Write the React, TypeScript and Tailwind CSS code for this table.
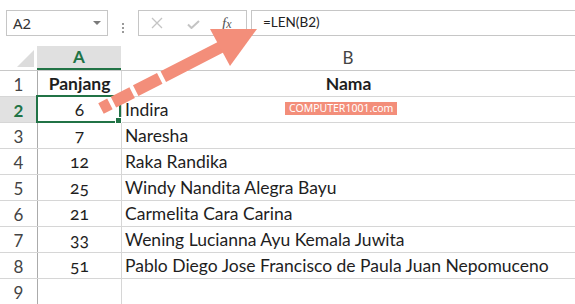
import React from "react";

const rows = [
  { n: 1, a: "Panjang", b: "Nama", head: true },
  { n: 2, a: "6", b: "Indira", selected: true },
  { n: 3, a: "7", b: "Naresha" },
  { n: 4, a: "12", b: "Raka Randika" },
  { n: 5, a: "25", b: "Windy Nandita Alegra Bayu" },
  { n: 6, a: "21", b: "Carmelita Cara Carina" },
  { n: 7, a: "33", b: "Wening Lucianna Ayu Kemala Juwita" },
  { n: 8, a: "51", b: "Pablo Diego Jose Francisco de Paula Juan Nepomuceno" },
  { n: 9, a: "", b: "" },
];

function FormulaBar() {
  return (
    <div className="flex h-[46px] pl-[6px] pt-[10px] font-['Noto_Sans',sans-serif]">
      {/* kotak nama */}
      <div className="flex h-[26px] w-[102px] items-center justify-between border border-[#c6c6c6] pl-[6px] pr-[6px]">
        <span className="text-[15px] leading-none text-[#333]">A2</span>
        <span className="h-0 w-0 border-x-[4px] border-t-[4px] border-x-transparent border-t-[#7a7a7a]" />
      </div>
      <div className="flex w-[30px] flex-col items-center justify-center gap-[2px] pb-[1px]">
        <span className="h-[2px] w-[2px] bg-[#9a9a9a]" />
        <span className="h-[2px] w-[2px] bg-[#9a9a9a]" />
        <span className="h-[2px] w-[2px] bg-[#9a9a9a]" />
      </div>
      {/* tombol */}
      <div className="flex h-[26px] w-[109px] items-center border border-[#c6c6c6]">
        <svg width="12" height="12" viewBox="0 0 12 12" className="ml-[12px]">
          <path d="M1 1 L11 11 M11 1 L1 11" stroke="#c4c4c4" strokeWidth="1.3" fill="none" />
        </svg>
        <svg width="13" height="9" viewBox="0 0 13 9" className="ml-[24px] mt-[2px]">
          <path d="M1 4.5 L4.5 8 L12 1" stroke="#c4c4c4" strokeWidth="2" fill="none" />
        </svg>
        <span className="ml-[22px] font-['Liberation_Serif',serif] text-[15px] italic leading-none text-[#555]">
          f<span className="text-[12px]">x</span>
        </span>
      </div>
      <div className="ml-[4px] flex h-[26px] flex-1 items-center border-y border-l border-[#c6c6c6] pl-[11px]">
        <span className="font-['Lato',sans-serif] text-[13.5px] leading-none text-[#222]">=LEN(B2)</span>
      </div>
    </div>
  );
}

function ColumnHeader() {
  return (
    <div className="flex h-[25px] border-b border-[#c8c8c8] font-['Lato',sans-serif] text-[17px]">
      <div className="relative w-[37px]">
        <svg width="37" height="24" className="absolute left-0 top-0">
          <polygon points="17,21 34,21 34,4" fill="#dcdcdc" />
        </svg>
      </div>
      <div className="flex w-[84px] items-center justify-center border-b-2 border-[#217346] bg-[#e0e0e0] font-bold text-[#217346]">
        A
      </div>
      <div className="flex flex-1 items-center justify-center text-[#444]">B</div>
    </div>
  );
}

export default function App() {
  return (
    <div className="relative h-[304px] w-[575px] overflow-hidden bg-white">
      <FormulaBar />
      <ColumnHeader />
      <div className="font-['Lato',sans-serif] text-[17.5px] text-[#1e1e1e]">
        {rows.map((r) => (
          <div key={r.n} className="flex h-[26px] border-b border-[#d6d6d6]">
            <div
              className={`flex w-[38px] items-center justify-center border-r border-[#ababab] pt-[2px] text-[17px] ${
                r.selected ? "bg-[#e1e1e1] font-bold text-[#217346]" : "text-[#444]"
              }`}
            >
              {r.n}
            </div>
            <div
              className={`relative flex w-[84px] items-center justify-center border-r border-[#d6d6d6] pt-[2px] oldstyle-nums ${
                r.head ? "font-bold" : ""
              }`}
            >
              {r.a}
              {r.selected && (
                <div className="absolute -left-[2px] -top-[2px] h-[28px] w-[85px] border-2 border-[#217346]">
                  <div className="absolute -bottom-[3px] -right-[3px] h-[7px] w-[7px] border border-white bg-[#217346]" />
                </div>
              )}
            </div>
            <div
              className={`relative flex flex-1 items-center pt-[2px] ${
                r.head ? "justify-center font-bold" : "pl-[3px]"
              }`}
            >
              {r.b}
              {r.selected && (
                <span className="absolute left-[163px] top-[5px] h-[13px] bg-[#f38e7a] px-[4px] font-['Noto_Sans',sans-serif] text-[10.5px] leading-[13px] text-white">
                  COMPUTER1001.com
                </span>
              )}
            </div>
          </div>
        ))}
      </div>
      {/* panah */}
      <svg
        className="pointer-events-none absolute left-0 top-0"
        width="575"
        height="304"
        viewBox="0 0 575 304"
      >
        <path
          d="M101 108.5 L221 47"
          stroke="#f38e7a"
          strokeWidth="12"
          strokeDasharray="10 4 21 4 27 4 200"
          fill="none"
        />
        <polygon points="210,29 257,29 230,66" fill="#f38e7a" />
      </svg>
    </div>
  );
}
